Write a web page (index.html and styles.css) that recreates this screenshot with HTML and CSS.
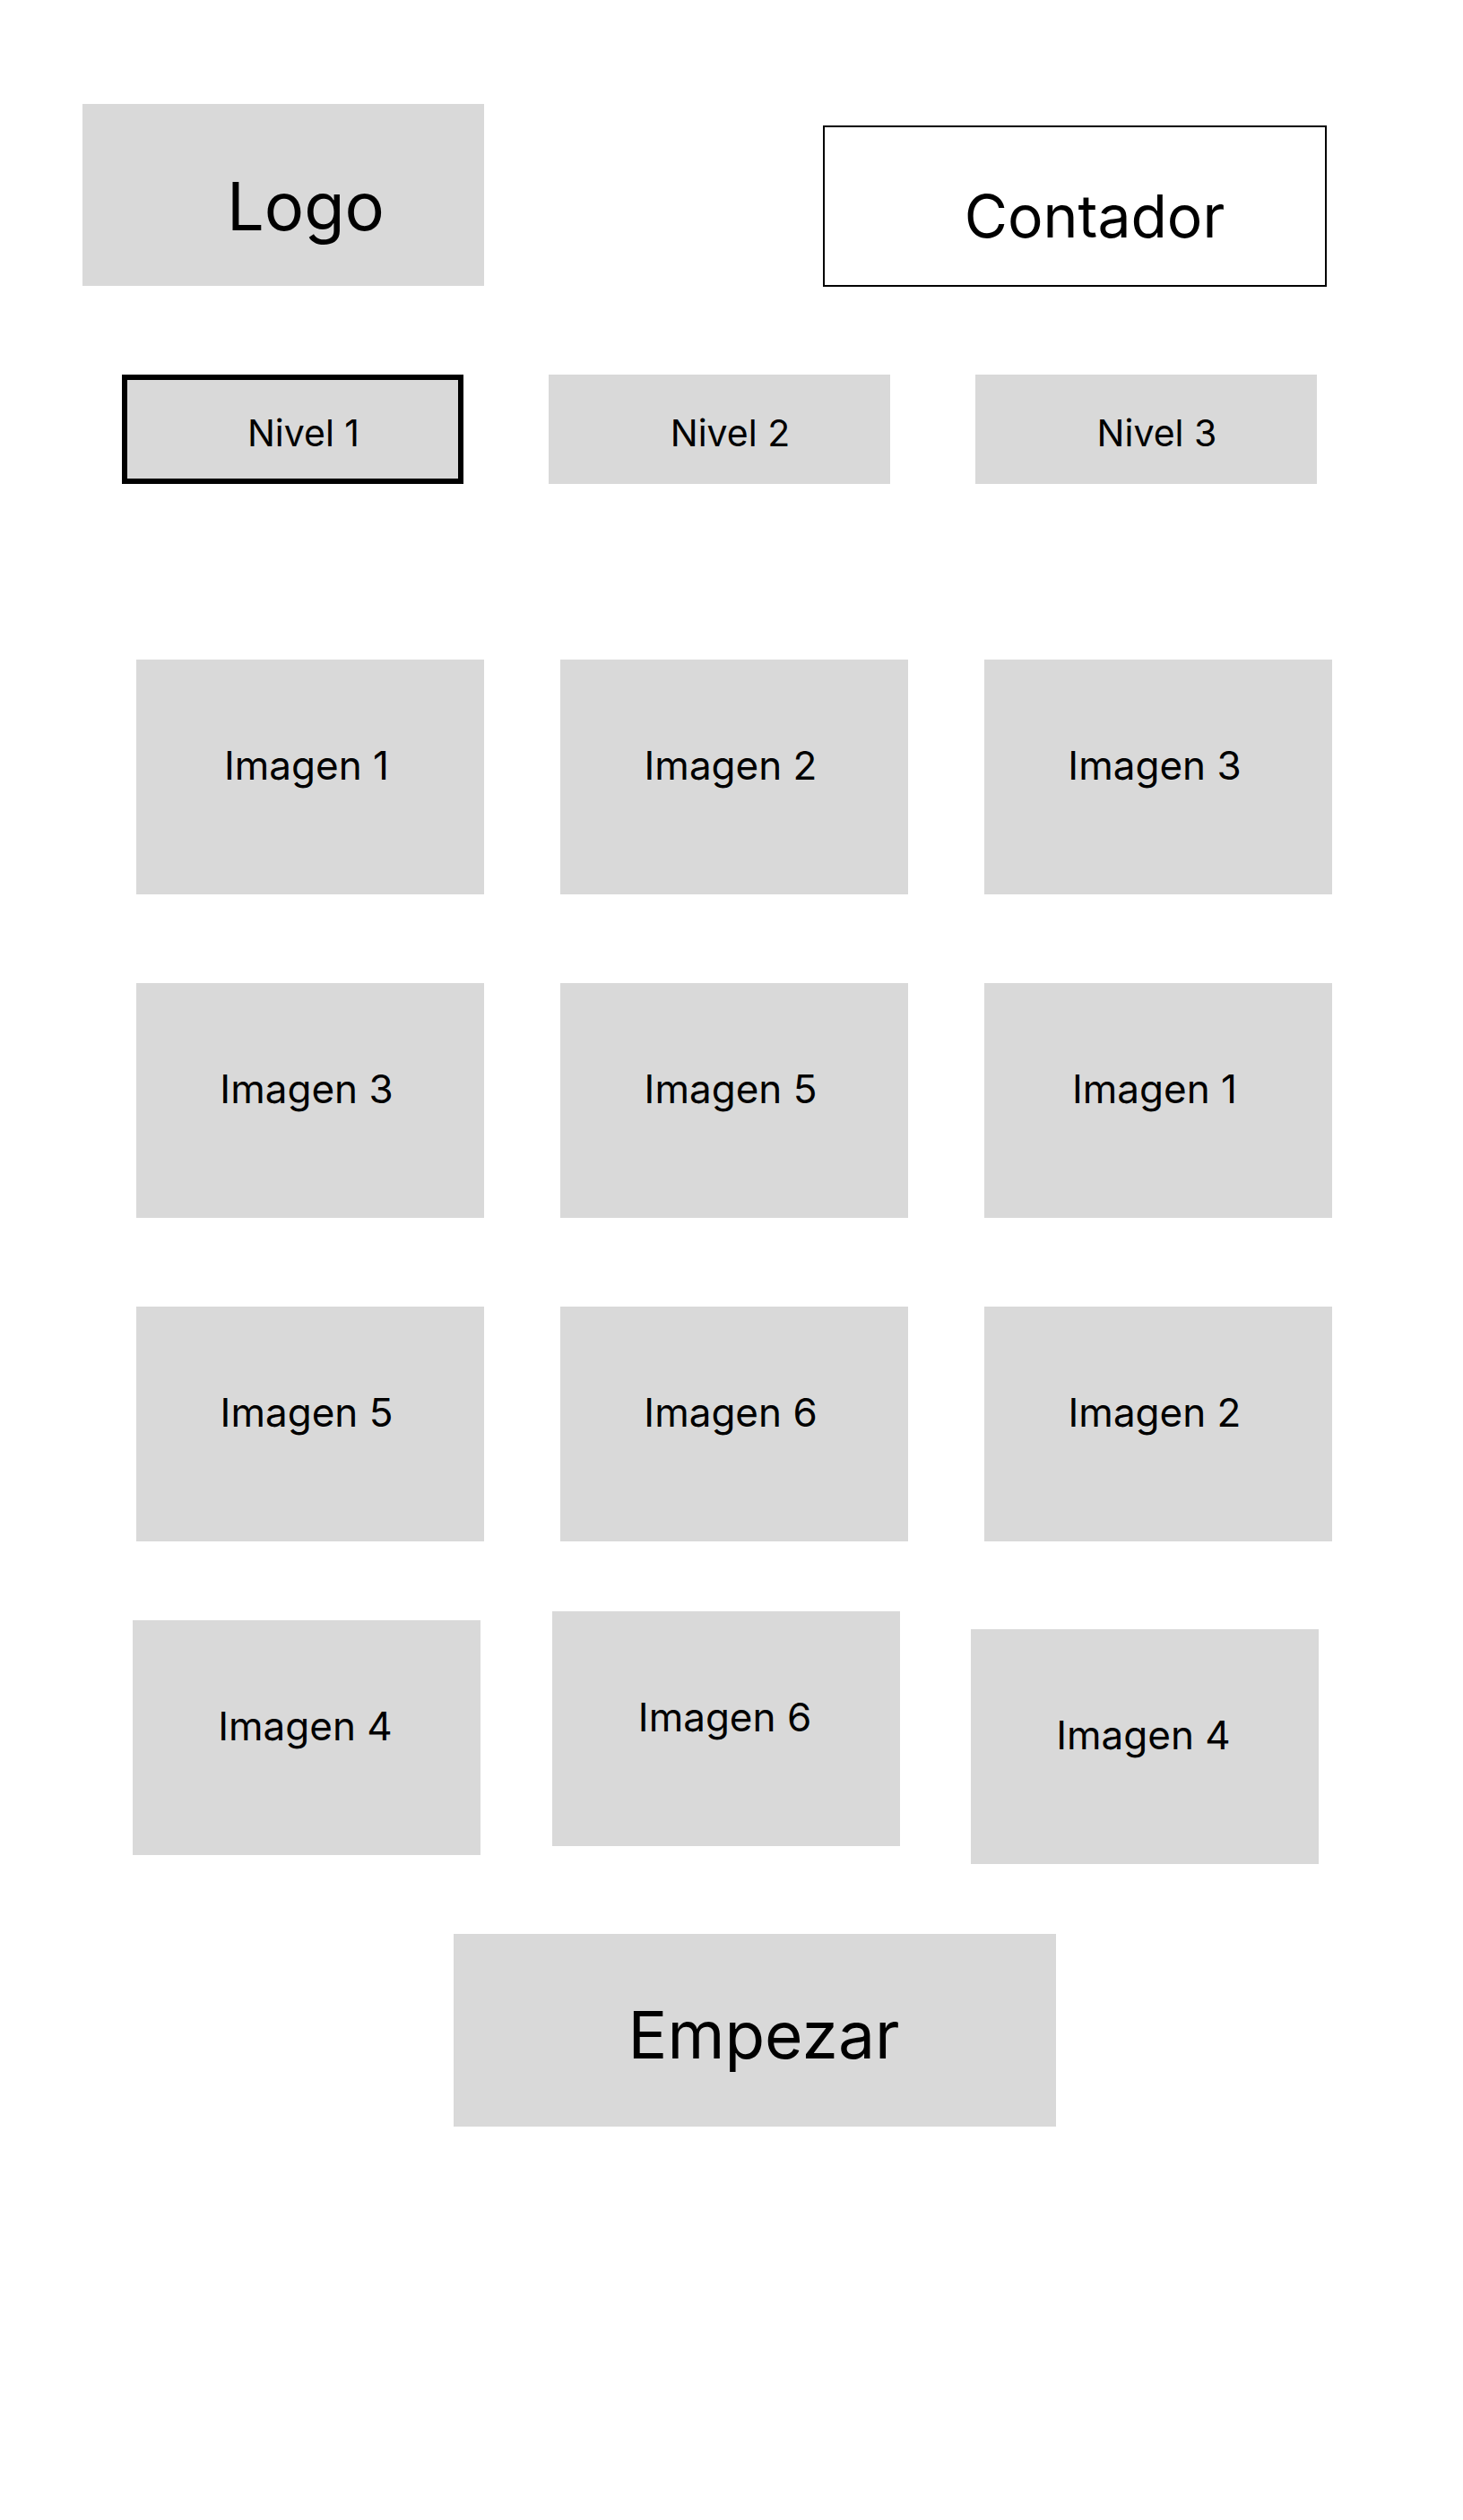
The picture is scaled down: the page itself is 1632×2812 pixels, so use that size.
FILE: index.html
```html
<!DOCTYPE html>
<html lang="es">
<head>
<meta charset="utf-8">
<title>Juego de memoria</title>
<link rel="stylesheet" href="styles.css">
</head>
<body>
<div class="page">
  <header class="header">
    <div class="logo">Logo</div>
    <div class="contador">Contador</div>
  </header>
  <nav class="niveles">
    <div class="nivel nivel-activo">Nivel 1</div>
    <div class="nivel">Nivel 2</div>
    <div class="nivel">Nivel 3</div>
  </nav>
  <section class="grid">
    <div class="card">Imagen 1</div>
    <div class="card">Imagen 2</div>
    <div class="card">Imagen 3</div>
    <div class="card">Imagen 3</div>
    <div class="card">Imagen 5</div>
    <div class="card">Imagen 1</div>
    <div class="card">Imagen 5</div>
    <div class="card">Imagen 6</div>
    <div class="card">Imagen 2</div>
  </section>
  <section class="last-row">
    <div class="card card-a">Imagen 4</div>
    <div class="card card-b">Imagen 6</div>
    <div class="card card-c">Imagen 4</div>
  </section>
  <div class="start-wrap">
    <button class="empezar" type="button">Empezar</button>
  </div>
</div>
</body>
</html>
```
FILE: styles.css
```css
* { box-sizing: border-box; }
html, body { margin: 0; padding: 0; background: #ffffff; }
body {
  font-family: "Inter", "Liberation Sans", sans-serif;
  color: #000000;
}
.page {
  width: 1632px;
  min-height: 2812px;
}
.header {
  display: flex;
  align-items: flex-start;
  padding: 116px 0 0 92px;
}
.logo {
  width: 448px;
  height: 203px;
  background: #d9d9d9;
  display: flex;
  align-items: center;
  justify-content: center;
  padding: 26px 0 0 50px;
  font-size: 74px;
  line-height: 1.21;
}
.contador {
  margin: 24px 0 0 378px;
  width: 562px;
  height: 180px;
  border: 2px solid #000000;
  display: flex;
  align-items: center;
  justify-content: center;
  padding: 24px 0 0 44px;
  font-size: 66px;
  line-height: 1.21;
}
.niveles {
  display: flex;
  gap: 95px;
  margin: 98px 0 0 136px;
}
.nivel {
  width: 381px;
  height: 122px;
  background: #d9d9d9;
  display: flex;
  align-items: center;
  justify-content: center;
  padding: 10px 0 0 24px;
  font-size: 41px;
  line-height: 1.21;
}
.nivel-activo {
  border: 6px solid #000000;
}
.grid {
  display: grid;
  grid-template-columns: repeat(3, 388px);
  grid-auto-rows: 262px;
  column-gap: 85px;
  row-gap: 99px;
  margin: 196px 0 0 152px;
}
.card {
  width: 388px;
  height: 262px;
  background: #d9d9d9;
  display: flex;
  align-items: center;
  justify-content: center;
  padding: 0 8px 24px 0;
  font-size: 44px;
  line-height: 1.21;
}
.last-row {
  display: flex;
  align-items: flex-start;
  margin: 78px 0 0 148px;
  height: 282px;
}
.card-a { margin-top: 10px; padding-right: 3px; }
.card-b { margin-left: 80px; padding-right: 3px; }
.card-c { margin-left: 79px; margin-top: 20px; padding-right: 3px; }
.start-wrap {
  margin: 78px 0 0 506px;
}
.empezar {
  width: 672px;
  height: 215px;
  background: #d9d9d9;
  border: none;
  margin: 0;
  display: flex;
  align-items: center;
  justify-content: center;
  padding: 11px 0 0 20px;
  font-family: "Inter", "Liberation Sans", sans-serif;
  font-size: 73px;
  line-height: 1.21;
  color: #000000;
}
```
